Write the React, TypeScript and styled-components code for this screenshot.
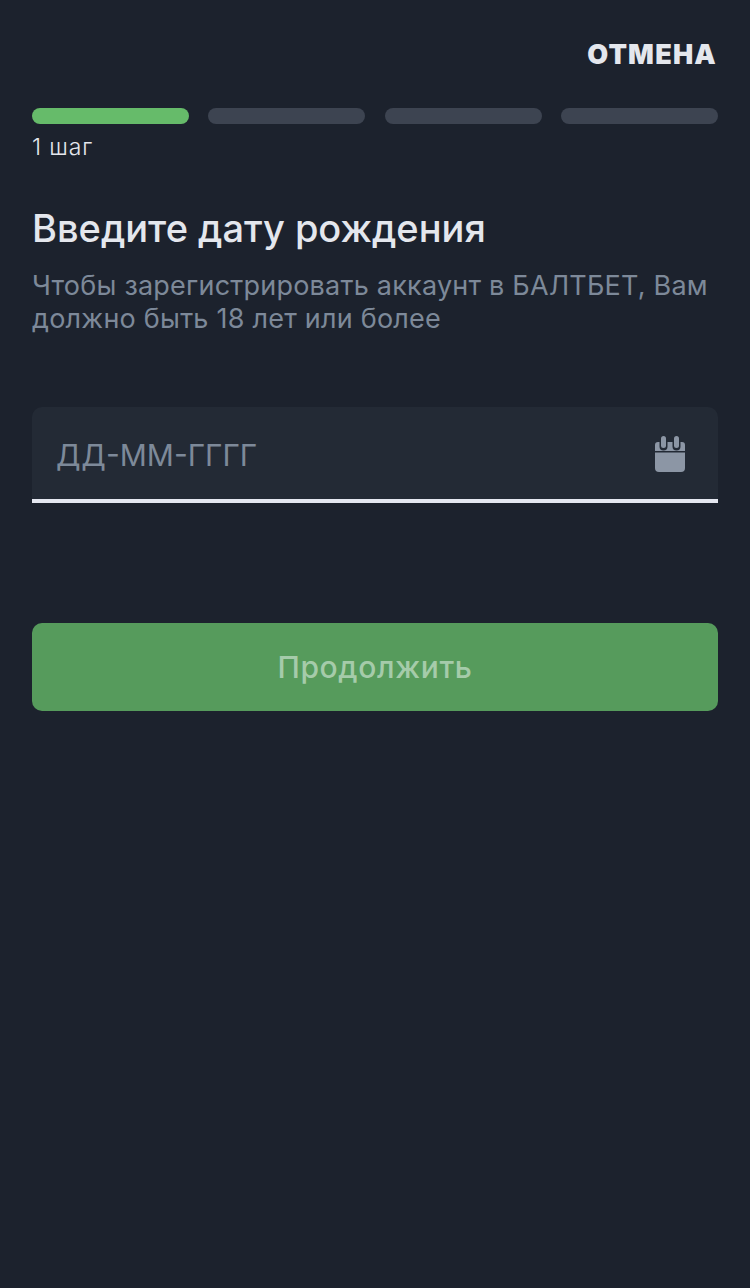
import React from "react";
import styled, { createGlobalStyle } from "styled-components";

const Global = createGlobalStyle`
  html, body { margin: 0; padding: 0; background: #1c222d; }
  * { box-sizing: border-box; }
`;

const Page = styled.div`
  width: 750px;
  height: 1288px;
  background: #1c222d;
  padding: 0 32px;
  font-family: Inter, "Liberation Sans", sans-serif;
  display: flex;
  flex-direction: column;
`;

const Header = styled.div`
  height: 108px;
  padding: 39px 1px 0 0;
  display: flex;
  justify-content: flex-end;
  align-items: flex-start;
`;

const Cancel = styled.span`
  font-size: 27px;
  line-height: 32px;
  font-weight: 900;
  letter-spacing: 1.2px;
  color: #e4e7ed;
`;

const Steps = styled.div`
  display: grid;
  grid-template-columns: repeat(4, 157px);
  justify-content: space-between;
`;

const Step = styled.div<{ $active?: boolean }>`
  height: 16px;
  border-radius: 8px;
  background: ${(p) => (p.$active ? "#66bb6a" : "#3d4451")};
`;

const StepLabel = styled.div`
  margin-top: 10px;
  font-size: 23px;
  line-height: 26px;
  font-weight: 300;
  letter-spacing: 0.9px;
  color: #e4e7ed;
`;

const Title = styled.h1`
  margin: 43px 0 0;
  font-size: 38px;
  line-height: 50px;
  font-weight: 500;
  color: #e4e7ed;
`;

const Subtitle = styled.p`
  margin: 16px 0 0;
  font-size: 27px;
  line-height: 33px;
  font-weight: 400;
  letter-spacing: 0.22px;
  color: #7d8999;
`;

const Field = styled.div`
  margin-top: 72px;
  height: 96px;
  background: #232a35;
  border-radius: 10px 10px 0 0;
  border-bottom: 4px solid #e4e7f0;
  padding: 4px 33px 0 24px;
  display: flex;
  align-items: center;
  justify-content: space-between;
`;

const Placeholder = styled.span`
  font-size: 30px;
  line-height: 40px;
  color: #7d8999;
`;

const CalendarIcon = styled.svg`
  width: 30px;
  height: 36px;
  display: block;
  flex: none;
  margin-top: -2px;
`;

const Submit = styled.button`
  margin-top: 120px;
  height: 88px;
  width: 100%;
  border: 0;
  border-radius: 10px;
  background: #569b5c;
  color: #a5cbaa;
  font-family: inherit;
  font-size: 30px;
  font-weight: 500;
  letter-spacing: 0.65px;
  padding: 0;
`;

export default function App() {
  return (
    <Page>
      <Global />
      <Header>
        <Cancel>ОТМЕНА</Cancel>
      </Header>
      <Steps>
        <Step $active />
        <Step />
        <Step />
        <Step />
      </Steps>
      <StepLabel>1 шаг</StepLabel>
      <Title>Введите дату рождения</Title>
      <Subtitle>
        Чтобы зарегистрировать аккаунт в БАЛТБЕТ, Вам
        <br />
        должно быть 18 лет или более
      </Subtitle>
      <Field>
        <Placeholder>ДД-ММ-ГГГГ</Placeholder>
        <CalendarIcon viewBox="0 0 30 36" aria-hidden="true">
          <path
            fill="#8c96a5"
            d="M3 6h1.5v4.5a4 4 0 0 0 8 0V6h5v4.5a4 4 0 0 0 8 0V6H27a3 3 0 0 1 3 3v6H0V9a3 3 0 0 1 3-3z"
          />
          <path fill="#8c96a5" d="M0 16.5h30V32a4 4 0 0 1-4 4H4a4 4 0 0 1-4-4z" />
          <rect x="6" y="0" width="5" height="12" rx="2.5" fill="#8c96a5" />
          <rect x="19" y="0" width="5" height="12" rx="2.5" fill="#8c96a5" />
        </CalendarIcon>
      </Field>
      <Submit type="button">Продолжить</Submit>
    </Page>
  );
}
